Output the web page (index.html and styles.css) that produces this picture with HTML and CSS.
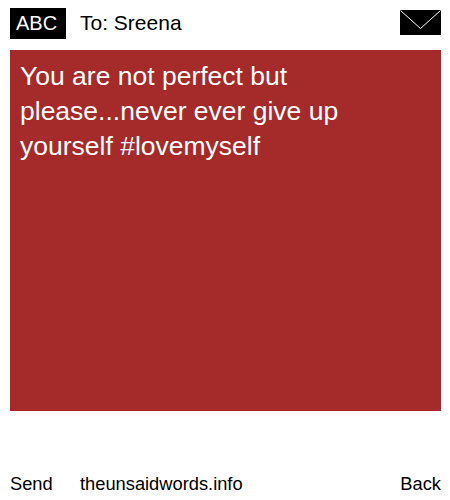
FILE: index.html
```html
<!DOCTYPE html>
<html lang="en">
<head>
<meta charset="utf-8">
<title>The Unsaid Words</title>
<link rel="stylesheet" href="styles.css">
</head>
<body>
<div class="page">
  <header class="top">
    <div class="abc">ABC</div>
    <div class="to">To: Sreena</div>
    <svg class="mail" width="41" height="25" viewBox="0 0 41 25" shape-rendering="crispEdges">
      <rect width="41" height="25" fill="#000"/>
      <path d="M0.5 0.5 L20.5 18.5 L40.5 0.5" fill="none" stroke="#fff" stroke-width="1" shape-rendering="auto"/>
    </svg>
  </header>
  <main class="message">You are not perfect but please...never ever give up yourself #lovemyself</main>
  <footer class="bottom">
    <span class="send">Send</span>
    <span class="site">theunsaidwords.info</span>
    <span class="back">Back</span>
  </footer>
</div>
</body>
</html>
```

FILE: styles.css
```css
html, body {
  margin: 0;
  padding: 0;
  background: #fff;
}
.page {
  width: 431px;
  height: 500px;
  padding: 0 9px 0 10px;
  display: flex;
  flex-direction: column;
  font-family: "Liberation Sans", Arial, sans-serif;
  color: #000;
}
.top {
  display: flex;
  align-items: flex-start;
  height: 31px;
  margin-top: 8px;
  margin-bottom: 11px;
}
.abc {
  box-sizing: border-box;
  width: 56px;
  height: 31px;
  padding-left: 6px;
  line-height: 30px;
  background: #000;
  color: #fff;
  font-size: 20px;
}
.to {
  margin-left: 14px;
  font-size: 21px;
  line-height: 30px;
  flex: 1;
}
.mail {
  display: block;
  margin-top: 2px;
}
.message {
  box-sizing: border-box;
  height: 361px;
  padding: 9px 10px;
  background: #a52a2a;
  color: #fff;
  font-size: 26.5px;
  line-height: 35px;
}
.bottom {
  display: flex;
  margin-top: 62px;
  font-size: 18.3px;
  line-height: 22px;
}
.send {
  width: 70px;
}
.site {
  flex: 1;
}
```
